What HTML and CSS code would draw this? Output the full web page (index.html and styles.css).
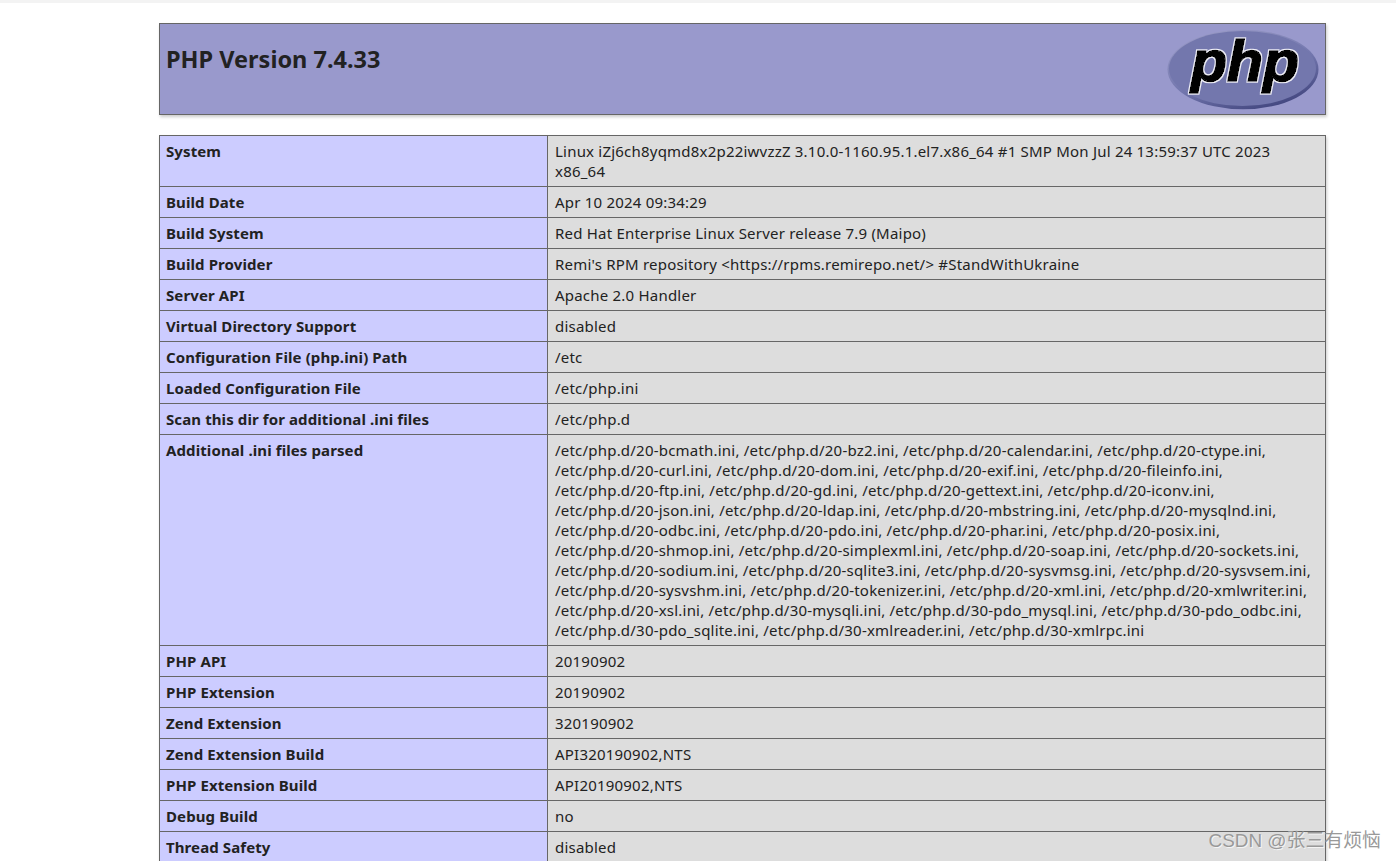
FILE: index.html
```html
<!DOCTYPE html>
<html lang="en">
<head>
<meta charset="utf-8">
<title>PHP 7.4.33 - phpinfo()</title>
<link rel="stylesheet" href="styles.css">
</head>
<body>
<div class="topline"></div>
<main class="center">
  <header class="head">
    <h1 class="title">PHP Version 7.4.33</h1>
    <svg class="logo" width="152" height="81" viewBox="0 0 152 81" role="img" aria-label="PHP logo">
      <defs>
        <linearGradient id="rim" x1="0.2" y1="0" x2="0.75" y2="1">
          <stop offset="0" stop-color="#9a9bc6"/>
          <stop offset="0.55" stop-color="#7377ae"/>
          <stop offset="1" stop-color="#3f437c"/>
        </linearGradient>
        <filter id="halo" x="-10%" y="-10%" width="120%" height="120%">
          <feMorphology in="SourceAlpha" operator="dilate" radius="1" result="fat"/>
          <feFlood flood-color="#eeeef6"/>
          <feComposite in2="fat" operator="in" result="edge"/>
          <feMerge>
            <feMergeNode in="edge"/>
            <feMergeNode in="SourceGraphic"/>
          </feMerge>
        </filter>
      </defs>
      <ellipse cx="76" cy="40.5" rx="75.5" ry="39.8" fill="url(#rim)"/>
      <ellipse cx="75.5" cy="39.5" rx="73.5" ry="37.5" fill="#7377ad"/>
      <text class="logo-text" x="24" y="52" textLength="108" lengthAdjust="spacingAndGlyphs" filter="url(#halo)">php</text>
    </svg>
  </header>
  <table class="info">
    <tr><th>System</th><td>Linux iZj6ch8yqmd8x2p22iwvzzZ 3.10.0-1160.95.1.el7.x86_64 #1 SMP Mon Jul 24 13:59:37 UTC 2023 x86_64</td></tr>
    <tr><th>Build Date</th><td>Apr 10 2024 09:34:29</td></tr>
    <tr><th>Build System</th><td>Red Hat Enterprise Linux Server release 7.9 (Maipo)</td></tr>
    <tr><th>Build Provider</th><td>Remi's RPM repository &lt;https://rpms.remirepo.net/&gt; #StandWithUkraine</td></tr>
    <tr><th>Server API</th><td>Apache 2.0 Handler</td></tr>
    <tr><th>Virtual Directory Support</th><td>disabled</td></tr>
    <tr><th>Configuration File (php.ini) Path</th><td>/etc</td></tr>
    <tr><th>Loaded Configuration File</th><td>/etc/php.ini</td></tr>
    <tr><th>Scan this dir for additional .ini files</th><td>/etc/php.d</td></tr>
    <tr><th>Additional .ini files parsed</th><td>/etc/php.d/20-bcmath.ini, /etc/php.d/20-bz2.ini, /etc/php.d/20-calendar.ini, /etc/php.d/20-ctype.ini,<br>/etc/php.d/20-curl.ini, /etc/php.d/20-dom.ini, /etc/php.d/20-exif.ini, /etc/php.d/20-fileinfo.ini,<br>/etc/php.d/20-ftp.ini, /etc/php.d/20-gd.ini, /etc/php.d/20-gettext.ini, /etc/php.d/20-iconv.ini,<br>/etc/php.d/20-json.ini, /etc/php.d/20-ldap.ini, /etc/php.d/20-mbstring.ini, /etc/php.d/20-mysqlnd.ini,<br>/etc/php.d/20-odbc.ini, /etc/php.d/20-pdo.ini, /etc/php.d/20-phar.ini, /etc/php.d/20-posix.ini,<br>/etc/php.d/20-shmop.ini, /etc/php.d/20-simplexml.ini, /etc/php.d/20-soap.ini, /etc/php.d/20-sockets.ini,<br>/etc/php.d/20-sodium.ini, /etc/php.d/20-sqlite3.ini, /etc/php.d/20-sysvmsg.ini, /etc/php.d/20-sysvsem.ini,<br>/etc/php.d/20-sysvshm.ini, /etc/php.d/20-tokenizer.ini, /etc/php.d/20-xml.ini, /etc/php.d/20-xmlwriter.ini,<br>/etc/php.d/20-xsl.ini, /etc/php.d/30-mysqli.ini, /etc/php.d/30-pdo_mysql.ini, /etc/php.d/30-pdo_odbc.ini,<br>/etc/php.d/30-pdo_sqlite.ini, /etc/php.d/30-xmlreader.ini, /etc/php.d/30-xmlrpc.ini</td></tr>
    <tr><th>PHP API</th><td>20190902</td></tr>
    <tr><th>PHP Extension</th><td>20190902</td></tr>
    <tr><th>Zend Extension</th><td>320190902</td></tr>
    <tr><th>Zend Extension Build</th><td>API320190902,NTS</td></tr>
    <tr><th>PHP Extension Build</th><td>API20190902,NTS</td></tr>
    <tr><th>Debug Build</th><td>no</td></tr>
    <tr><th>Thread Safety</th><td>disabled</td></tr>
  </table>
</main>
<div class="watermark">CSDN @张三有烦恼</div>
</body>
</html>
```
FILE: styles.css
```css
html, body {
  margin: 0;
  height: 861px;
  overflow: hidden;
  background: #fff;
}
body {
  position: relative;
  font-family: "Noto Sans", "Open Sans", "Liberation Sans", sans-serif;
  font-size: 15px;
  line-height: 20px;
  color: #222;
}
.topline {
  height: 3px;
  background: #f3f3f3;
}
.center {
  width: 1167px;
  margin: 20px 0 0 159px;
}
.head {
  display: flex;
  justify-content: space-between;
  box-sizing: border-box;
  height: 92px;
  padding: 5px 6px 5px 6px;
  background: #9999cc;
  border: 1px solid #666;
  box-shadow: 1px 2px 3px #ccc;
}
.title {
  margin: 0;
  padding-top: 15px;
  font-size: 23.5px;
  line-height: 30px;
  font-weight: 700;
}
.logo { display: block; }
.logo-text {
  font-family: "Liberation Sans", sans-serif;
  font-size: 58px;
  font-weight: 700;
  font-style: italic;
  fill: #000;
  stroke: #000;
  stroke-width: 1.6px;
}
.info {
  width: 100%;
  margin-top: 20px;
  table-layout: fixed;
  border-collapse: collapse;
  box-shadow: 1px 2px 3px #ccc;
}
.info th, .info td {
  border: 1px solid #666;
  padding: 5px 6px 5px 7px;
  vertical-align: top;
  text-align: left;
  overflow-wrap: anywhere;
}
.info th {
  box-sizing: border-box;
  width: 388px;
  padding-left: 6px;
  background: #ccccff;
  font-weight: 700;
  letter-spacing: .1px;
}
.info td {
  background: #ddd;
  letter-spacing: .21px;
}
.watermark {
  position: absolute;
  right: 15px;
  top: 829px;
  font-size: 18.9px;
  line-height: 24px;
  color: #999;
  text-shadow: 1px 1px 0 rgba(255,255,255,.7);
  font-family: "Liberation Sans", "Noto Sans CJK SC", sans-serif;
}
```
